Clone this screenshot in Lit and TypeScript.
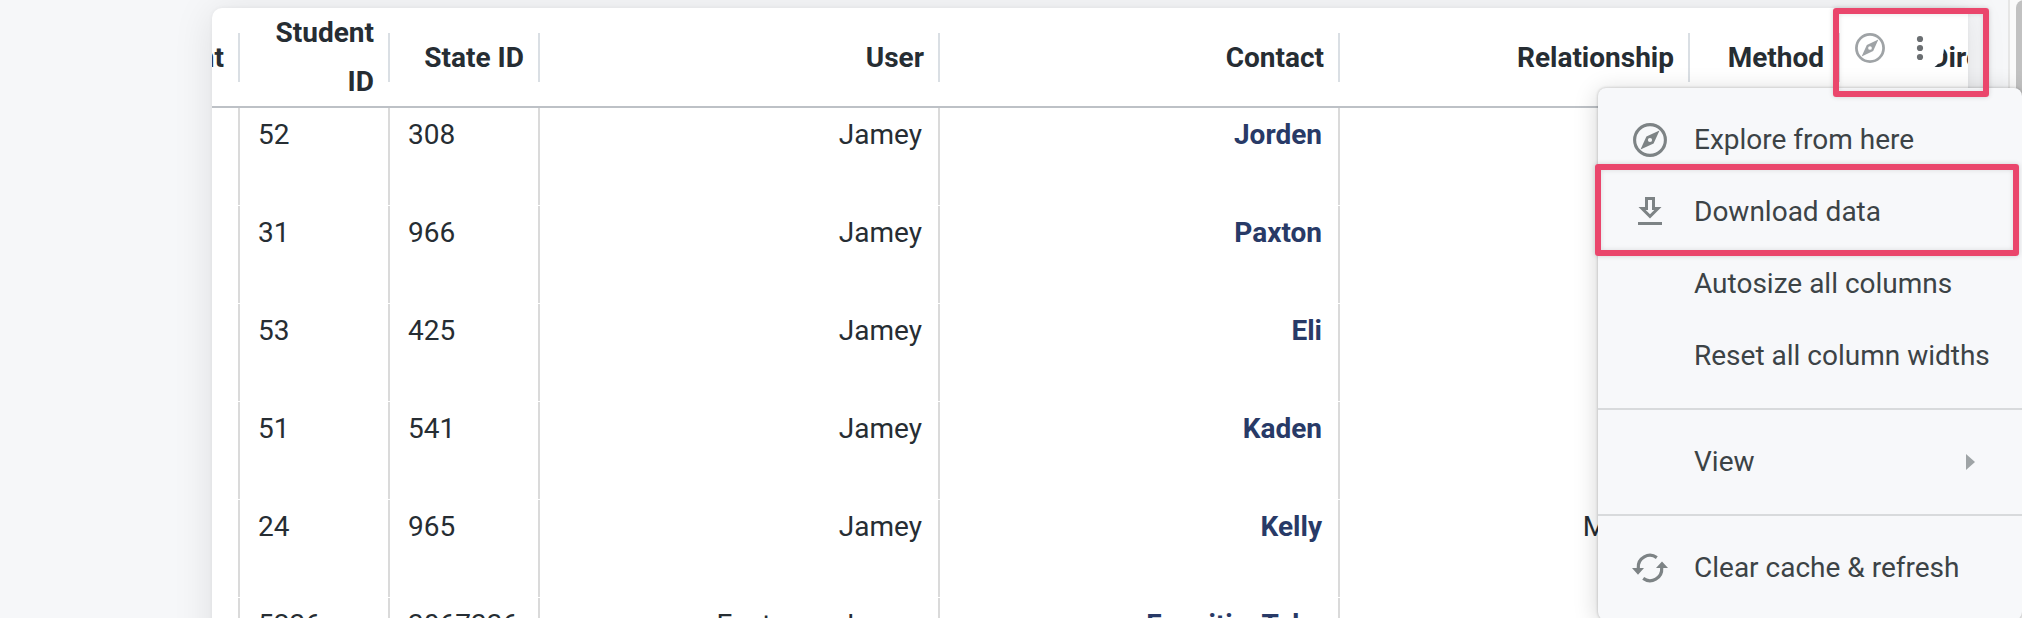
import { LitElement, html, css, svg } from "lit";
import { customElement } from "lit/decorators.js";

interface Row {
  student: string;
  state: string;
  user: string;
  contact: string;
  relationship: string;
}

const ROWS: Row[] = [
  { student: "52", state: "308", user: "Jamey", contact: "Jorden", relationship: "" },
  { student: "31", state: "966", user: "Jamey", contact: "Paxton", relationship: "" },
  { student: "53", state: "425", user: "Jamey", contact: "Eli", relationship: "" },
  { student: "51", state: "541", user: "Jamey", contact: "Kaden", relationship: "" },
  { student: "24", state: "965", user: "Jamey", contact: "Kelly", relationship: "Mother" },
  { student: "5236", state: "3067336", user: "Eastman, Jamey", contact: "Founitin, Toby", relationship: "" },
];

const compass = svg`
  <circle cx="17" cy="17" r="15.4" fill="none" stroke="currentColor" stroke-width="3.1"/>
  <path fill="currentColor" fill-rule="evenodd" d="M26.5 7.5 20.6 20.4 7.5 26.5 13.4 13.6ZM17 14.9a2.1 2.1 0 1 0 0 4.2a2.1 2.1 0 1 0 0-4.2Z"/>`;

@customElement("app-root")
export class AppRoot extends LitElement {
  static styles = css`
    :host {
      display: block;
      position: relative;
      width: 2022px;
      height: 618px;
      overflow: hidden;
      background: #f6f7f9;
      font-family: Roboto, "Liberation Sans", sans-serif;
      font-size: 28px;
      color: #262d33;
    }
    * { box-sizing: border-box; }
    .page { display: flex; height: 618px; padding: 8px 0 0 212px; }
    .card {
      width: 1756px;
      height: 700px;
      flex: none;
      background: #fff;
      border-radius: 10px 0 0 0;
      box-shadow: 0 0 4px rgba(0, 0, 0, 0.05), 0 4px 40px rgba(0, 0, 0, 0.1);
    }
    .clip { width: 1756px; height: 610px; overflow: hidden; border-radius: 10px 0 0 0; }
    .grid { display: grid; grid-template-columns: 28px 150px 150px 400px 400px 350px 150px 220px; }
    .head { height: 100px; border-bottom: 2px solid #bdc1c6; align-items: center; }
    .th {
      display: flex;
      align-items: center;
      justify-content: flex-end;
      height: 49px;
      border-right: 2px solid #dadfe4;
      padding-right: 14px;
      font-weight: 700;
      line-height: 49px;
      text-align: right;
    }
    .wrap { padding-left: 19px; }
    .row { height: 98px; }
    .td {
      border-right: 2px solid #dadada;
      padding: 10px 16px 0 18px;
      line-height: 34px;
      text-align: right;
      white-space: nowrap;
      border-image: linear-gradient(#fff 0 1px, #dadada 1px 96px, #fff 96px) 1;
    }
    .edge { padding: 0; }
    .left { text-align: left; }
    .link { color: #283a67; font-weight: 700; }
    .last { border-right: 0; }
    .tools {
      position: absolute;
      left: 1840px;
      top: 24px;
      width: 104px;
      height: 48px;
      display: flex;
      align-items: center;
      padding-left: 15px;
      gap: 31px;
      background: #fff;
      border-radius: 0 24px 24px 0;
      color: #9fa3a6;
    }
    .tools svg { display: block; flex: none; }
    .rail {
      position: absolute;
      top: 0;
      right: 0;
      width: 14px;
      height: 618px;
      background: #fafafa;
      border-left: 2px solid #e6e6e6;
      padding-left: 6px;
    }
    .thumb { width: 16px; height: 400px; border-radius: 8px; background: #c1c1c1; }
    .menu {
      position: absolute;
      left: 1598px;
      top: 88px;
      width: 424px;
      height: 532px;
      background: #f7f8fa;
      border-radius: 8px;
      box-shadow: 0 0 3px rgba(0, 0, 0, 0.25), 0 4px 24px rgba(0, 0, 0, 0.18);
      color: #3c4346;
    }
    .group { padding: 16px 0; }
    .group + .group { border-top: 2px solid #d8dadc; }
    .item { display: grid; grid-template-columns: 96px 1fr 60px; height: 72px; align-items: center; line-height: 36px; white-space: nowrap; }
    .icon { display: flex; width: 104px; justify-content: center; color: #7d8385; }
    .icon svg { display: block; overflow: visible; }
    .arrow { width: 9px; height: 16px; background: #9fa4a6; clip-path: polygon(0 0, 100% 50%, 0 100%); margin-left: 4px; }
    .mark { position: absolute; border: 6px solid #ea466c; border-radius: 3px; box-shadow: 0 0 5px rgba(0, 0, 0, 0.16), inset 0 0 5px rgba(0, 0, 0, 0.12); }
    .mark-tools { left: 1833px; top: 8px; width: 156px; height: 89px; }
    .mark-download { left: 1595px; top: 164px; width: 424px; height: 92px; }
  `;

  private item(label: string, icon: unknown = "", sub = false) {
    return html`<div class="item">
      <span class="icon">${icon}</span><span>${label}</span>${sub ? html`<i class="arrow"></i>` : ""}
    </div>`;
  }

  render() {
    return html`
      <div class="page">
        <div class="card"><div class="clip">
          <div class="grid head">
            <div class="th">Student</div>
            <div class="th wrap">Student ID</div>
            <div class="th">State ID</div>
            <div class="th">User</div>
            <div class="th">Contact</div>
            <div class="th">Relationship</div>
            <div class="th">Method</div>
            <div class="th">Direction</div>
          </div>
          ${ROWS.map((r) => html`<div class="grid row">
            <div class="td edge"></div>
            <div class="td left">${r.student}</div>
            <div class="td left">${r.state}</div>
            <div class="td">${r.user}</div>
            <div class="td link">${r.contact}</div>
            <div class="td">${r.relationship}</div>
            <div class="td"></div>
            <div class="td last"></div>
          </div>`)}
        </div></div>
      </div>
      <div class="rail"><div class="thumb"></div></div>
      <div class="tools">
        <svg width="30" height="30" viewBox="0 0 34 34">${compass}</svg>
        <svg width="8" height="26" viewBox="0 0 8 26" fill="#6b6f72"><circle cx="4" cy="4" r="3.1"/><circle cx="4" cy="13" r="3.1"/><circle cx="4" cy="22" r="3.1"/></svg>
      </div>
      <div class="menu">
        <div class="group">
          ${this.item("Explore from here", html`<svg width="34" height="34" viewBox="0 0 34 34">${compass}</svg>`)}
          ${this.item("Download data", html`<svg width="34" height="34" viewBox="0 0 34 34"><path fill="currentColor" fill-rule="evenodd" d="M12 2H22V12H28.5L17 23.5 5.5 12H12ZM15 5V15H12.7L17 19.3 21.3 15H19V5ZM5 27H29V30H5Z"/></svg>`)}
          ${this.item("Autosize all columns")}
          ${this.item("Reset all column widths")}
        </div>
        <div class="group">${this.item("View", "", true)}</div>
        <div class="group">
          ${this.item("Clear cache & refresh", html`<svg width="36" height="34" viewBox="0 0 36 34"><g fill="none" stroke="currentColor" stroke-width="3.2"><path d="M24.8 6.6A11.7 11.7 0 0 0 6.3 17"/><path d="M11.2 27.4A11.7 11.7 0 0 0 29.7 17"/></g><path fill="currentColor" d="M0 17H12L6 23.8ZM24 17H36L30 10.4Z"/></svg>`)}
        </div>
      </div>
      <div class="mark mark-tools"></div>
      <div class="mark mark-download"></div>
    `;
  }
}
